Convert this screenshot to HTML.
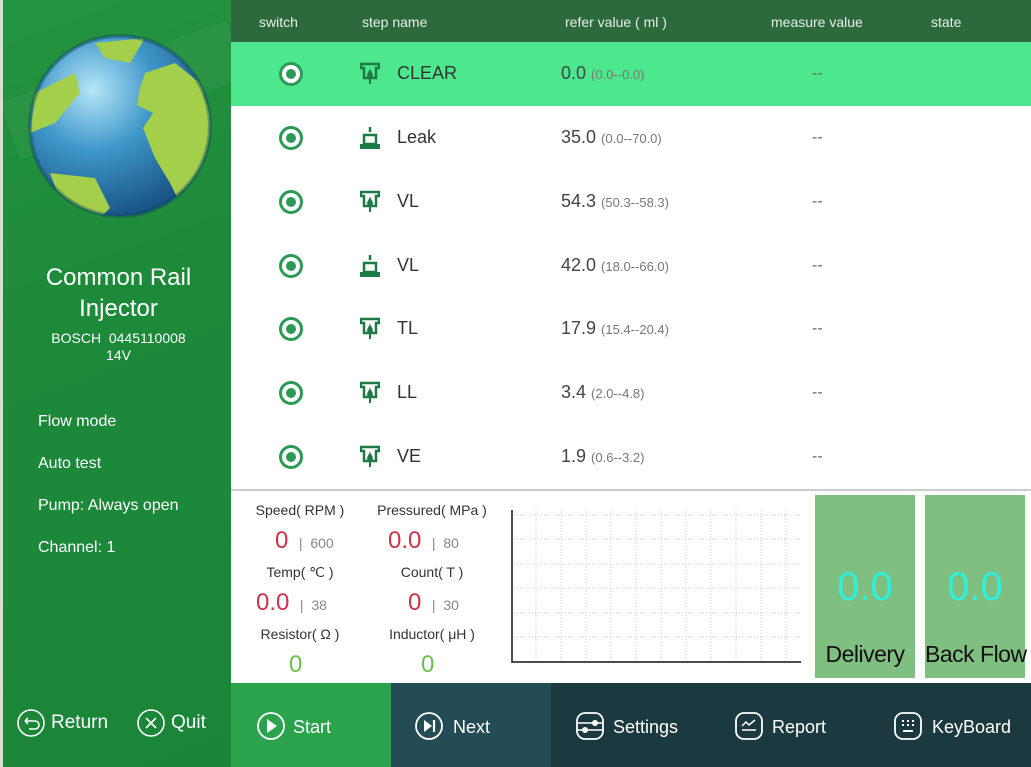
<!DOCTYPE html>
<html><head><meta charset="utf-8"><style>
*{margin:0;padding:0;box-sizing:border-box}
body{width:1031px;height:767px;overflow:hidden;font-family:"Liberation Sans",sans-serif;background:#fff;position:relative}
.left{position:absolute;left:0;top:0;width:231px;height:767px;background:linear-gradient(160deg,#23943f 0%,#1d8a3a 40%,#1a8538 100%);border-left:3px solid #cfe3d2}
.hdr{position:absolute;left:231px;top:0;width:800px;height:42px;background:#2c6a3c;color:#e6efe8;font-size:14px}
.hdr span{position:absolute;top:14px}
.row{position:absolute;left:231px;width:800px;height:64px;color:#333;font-size:18px}
.row.sel{background:#4de88e}
.row .rad{position:absolute;left:48px;top:20px;width:24px;height:24px;border:3px solid #2a9a55;border-radius:50%;background:#fff}
.row .rad:after{content:"";position:absolute;left:4px;top:4px;width:10px;height:10px;border-radius:50%;background:#2a9a55}
.row .ic{position:absolute;left:129px;top:20px}
.row .nm{position:absolute;left:166px;top:21px}
.row .rv{position:absolute;left:330px;top:21px;color:#444}
.row .rv small{font-size:13px;color:#777}
.row .mv{position:absolute;left:581px;top:23px;color:#666;font-size:16px}
.lbl{position:absolute;font-size:14px;color:#333;text-align:center;width:120px}
.val{position:absolute;font-size:24px;color:#d0314a}
.sm{font-size:14px;color:#888}
.box{position:absolute;top:495px;width:100px;height:183px;background:#7fbf80}
.box .n{position:absolute;top:70px;width:100%;text-align:center;font-size:40px;color:#2ff0dc}
.box .t{position:absolute;top:146px;width:100%;text-align:center;font-size:23px;color:#111;white-space:nowrap;letter-spacing:-0.5px}
.foot{position:absolute;top:683px;height:84px;color:#fff;font-size:18px}
.foot svg{position:absolute;top:28px}
.foot span{position:absolute;top:34px}
</style></head><body>
<div class="left">
<div style="position:absolute;left:0;top:60px;width:240px;height:60px;background:rgba(255,255,255,0.04);transform:rotate(-20deg)"></div>
<svg width="190" height="190" style="position:absolute;left:22px;top:33px" viewBox="0 0 190 190">
<defs><radialGradient id="g" cx="0.35" cy="0.3" r="0.75"><stop offset="0" stop-color="#b5e6f7"/><stop offset="0.45" stop-color="#3f97c9"/><stop offset="1" stop-color="#164f80"/></radialGradient>
<clipPath id="c"><circle cx="95" cy="93" r="90"/></clipPath></defs>
<circle cx="95" cy="93" r="90" fill="url(#g)"/>
<g clip-path="url(#c)" fill="#a3cf4a">
<path d="M120 40 L150 30 L175 50 L190 95 L180 150 L160 180 L145 150 L130 125 L118 95 L128 80 L112 72 L115 55 Z"/>
<path d="M25 140 L70 145 L85 175 L70 190 L40 180 Z"/>
<path d="M10 60 L50 40 L55 60 L30 90 L5 100 Z"/>
<path d="M70 10 L120 5 L105 30 L80 25 Z"/>
</g>
<circle cx="95" cy="93" r="90" fill="none" stroke="#0f3e66" stroke-opacity="0.4" stroke-width="4"/>
</svg>
<div style="position:absolute;left:0;top:262px;width:231px;text-align:center;color:#fff;font-size:24px;line-height:31px">Common Rail<br>Injector</div>
<div style="position:absolute;left:0;top:330px;width:231px;text-align:center;color:#fff;font-size:14px;line-height:17px">BOSCH &nbsp;0445110008<br>14V</div>
<div style="position:absolute;left:35px;top:401px;color:#fff;font-size:16px;line-height:42px">Flow mode<br>Auto test<br>Pump: Always open<br>Channel: 1</div>
<svg width="30" height="30" style="position:absolute;left:13px;top:708px"><circle cx="15" cy="15" r="13" fill="none" stroke="#fff" stroke-width="1.6"/><path d="M9 13 h10 a4 4 0 0 1 0 8 h-6 M9 13 l3 -3 M9 13 l3 3" fill="none" stroke="#fff" stroke-width="1.6"/></svg>
<div style="position:absolute;left:48px;top:712px;color:#fff;font-size:19px">Return</div>
<svg width="30" height="30" style="position:absolute;left:133px;top:708px"><circle cx="15" cy="15" r="13" fill="none" stroke="#fff" stroke-width="1.6"/><path d="M10 10 L20 20 M20 10 L10 20" stroke="#fff" stroke-width="1.6"/></svg>
<div style="position:absolute;left:168px;top:712px;color:#fff;font-size:19px">Quit</div>
</div>
<div class="hdr"><span style="left:28px">switch</span><span style="left:131px">step name</span><span style="left:334px">refer value ( ml )</span><span style="left:540px">measure value</span><span style="left:700px">state</span></div>

<div class="row sel" style="top:42px"><div class="rad"></div><svg class="ic" width="20" height="24"><path d="M1 2h18v4h-3v10h-12v-10h-3z" fill="none" stroke="#1e7a44" stroke-width="2.5"/><path d="M10 9 l-2 4 a2 2 0 0 0 4 0z M10 17v5" stroke="#1e7a44" fill="#1e7a44" stroke-width="2"/></svg><div class="nm">CLEAR</div><div class="rv">0.0 <small>(0.0--0.0)</small></div><div class="mv">--</div></div>
<div class="row" style="top:106px"><div class="rad"></div><svg class="ic" width="20" height="24"><path d="M10 1v5 M4 9h12v9h-12z" fill="none" stroke="#1e7a44" stroke-width="2.5"/><rect x="0" y="18" width="20" height="5" fill="#1e7a44"/></svg><div class="nm">Leak</div><div class="rv">35.0 <small>(0.0--70.0)</small></div><div class="mv">--</div></div>
<div class="row" style="top:170px"><div class="rad"></div><svg class="ic" width="20" height="24"><path d="M1 2h18v4h-3v10h-12v-10h-3z" fill="none" stroke="#1e7a44" stroke-width="2.5"/><path d="M10 9 l-2 4 a2 2 0 0 0 4 0z M10 17v5" stroke="#1e7a44" fill="#1e7a44" stroke-width="2"/></svg><div class="nm">VL</div><div class="rv">54.3 <small>(50.3--58.3)</small></div><div class="mv">--</div></div>
<div class="row" style="top:234px"><div class="rad"></div><svg class="ic" width="20" height="24"><path d="M10 1v5 M4 9h12v9h-12z" fill="none" stroke="#1e7a44" stroke-width="2.5"/><rect x="0" y="18" width="20" height="5" fill="#1e7a44"/></svg><div class="nm">VL</div><div class="rv">42.0 <small>(18.0--66.0)</small></div><div class="mv">--</div></div>
<div class="row" style="top:297px"><div class="rad"></div><svg class="ic" width="20" height="24"><path d="M1 2h18v4h-3v10h-12v-10h-3z" fill="none" stroke="#1e7a44" stroke-width="2.5"/><path d="M10 9 l-2 4 a2 2 0 0 0 4 0z M10 17v5" stroke="#1e7a44" fill="#1e7a44" stroke-width="2"/></svg><div class="nm">TL</div><div class="rv">17.9 <small>(15.4--20.4)</small></div><div class="mv">--</div></div>
<div class="row" style="top:361px"><div class="rad"></div><svg class="ic" width="20" height="24"><path d="M1 2h18v4h-3v10h-12v-10h-3z" fill="none" stroke="#1e7a44" stroke-width="2.5"/><path d="M10 9 l-2 4 a2 2 0 0 0 4 0z M10 17v5" stroke="#1e7a44" fill="#1e7a44" stroke-width="2"/></svg><div class="nm">LL</div><div class="rv">3.4 <small>(2.0--4.8)</small></div><div class="mv">--</div></div>
<div class="row" style="top:425px"><div class="rad"></div><svg class="ic" width="20" height="24"><path d="M1 2h18v4h-3v10h-12v-10h-3z" fill="none" stroke="#1e7a44" stroke-width="2.5"/><path d="M10 9 l-2 4 a2 2 0 0 0 4 0z M10 17v5" stroke="#1e7a44" fill="#1e7a44" stroke-width="2"/></svg><div class="nm">VE</div><div class="rv">1.9 <small>(0.6--3.2)</small></div><div class="mv">--</div></div>

<div style="position:absolute;left:231px;top:489px;width:800px;height:2px;background:#ccc"></div>
<div class="lbl" style="left:240px;top:502px">Speed( RPM )</div>
<div class="lbl" style="left:372px;top:502px">Pressured( MPa )</div>
<div class="val" style="left:275px;top:527px">0 <span class="sm">&nbsp;|&nbsp; 600</span></div>
<div class="val" style="left:388px;top:527px">0.0 <span class="sm">&nbsp;|&nbsp; 80</span></div>
<div class="lbl" style="left:240px;top:564px">Temp( ℃ )</div>
<div class="lbl" style="left:372px;top:564px">Count( T )</div>
<div class="val" style="left:256px;top:589px">0.0 <span class="sm">&nbsp;|&nbsp; 38</span></div>
<div class="val" style="left:408px;top:589px">0 <span class="sm">&nbsp;|&nbsp; 30</span></div>
<div class="lbl" style="left:240px;top:626px">Resistor( Ω )</div>
<div class="lbl" style="left:372px;top:626px">Inductor( μH )</div>
<div class="val" style="left:289px;top:651px;color:#6abf4a">0</div>
<div class="val" style="left:421px;top:651px;color:#6abf4a">0</div>
<svg width="290" height="155" style="position:absolute;left:511px;top:510px">
<g stroke="#ccc" stroke-dasharray="1 2" stroke-width="1">
<path d="M0 5H290M0 29H290M0 54H290M0 78H290M0 103H290M0 127H290"/>
<path d="M25 0V152M50 0V152M75 0V152M100 0V152M125 0V152M150 0V152M175 0V152M200 0V152M225 0V152M250 0V152M275 0V152"/>
</g>
<path d="M1 0V152H290" fill="none" stroke="#111" stroke-width="1.5"/>
</svg>
<div class="box" style="left:815px"><div class="n">0.0</div><div class="t">Delivery</div></div>
<div class="box" style="left:925px"><div class="n">0.0</div><div class="t">Back Flow</div></div>

<div class="foot" style="left:231px;width:160px;background:#2ba24c"><svg width="30" height="30" style="left:25px"><circle cx="15" cy="15" r="13" fill="none" stroke="#fff" stroke-width="1.8"/><path d="M11 8 L21 15 L11 22Z" fill="#fff"/></svg><span style="left:62px">Start</span></div>
<div class="foot" style="left:391px;width:160px;background:#234c55"><svg width="30" height="30" style="left:23px"><circle cx="15" cy="15" r="13" fill="none" stroke="#fff" stroke-width="1.8"/><path d="M10 9 L18 15 L10 21Z" fill="#fff"/><path d="M20 9V21" stroke="#fff" stroke-width="2.2"/></svg><span style="left:62px">Next</span></div>
<div class="foot" style="left:551px;width:480px;background:#1b3a40">
<svg width="30" height="30" style="left:24px"><rect x="2" y="2" width="26" height="26" rx="8" fill="none" stroke="#fff" stroke-width="1.8"/><path d="M2 12H28M2 19H28" stroke="#fff" stroke-width="1.5"/><circle cx="20" cy="12" r="3" fill="#fff"/><circle cx="10" cy="19" r="3" fill="#fff"/></svg><span style="left:62px">Settings</span>
<svg width="30" height="30" style="left:183px"><rect x="2" y="2" width="26" height="26" rx="8" fill="none" stroke="#fff" stroke-width="1.8"/><path d="M8 15 L12 11 L15 14 L21 9 M8 19H22" fill="none" stroke="#fff" stroke-width="1.5"/></svg><span style="left:221px">Report</span>
<svg width="30" height="30" style="left:342px"><rect x="2" y="2" width="26" height="26" rx="8" fill="none" stroke="#fff" stroke-width="1.8"/><path d="M9 10h2M14 10h2M19 10h2M9 14h2M19 14h2M14 14h2M10 20h10" stroke="#fff" stroke-width="2"/></svg><span style="left:381px">KeyBoard</span>
</div>
</body></html>
